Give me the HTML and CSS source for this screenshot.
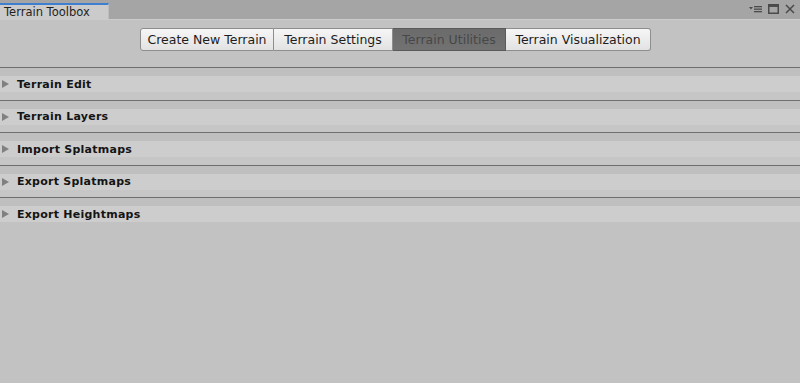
FILE: index.html
```html
<!DOCTYPE html>
<html>
<head>
<meta charset="utf-8">
<link rel="stylesheet" href="styles.css">
</head>
<body>
<div class="window">
  <div class="tabbar">
    <div class="tab">Terrain Toolbox</div>
    <div class="win-icons">
      <svg width="13" height="10" viewBox="0 0 13 10"><path d="M0 3 L4 3 L2 5.5 Z" fill="#4a4a4a"/><rect x="5" y="2" width="8" height="1.3" fill="#4a4a4a"/><rect x="5" y="4.5" width="8" height="1.3" fill="#4a4a4a"/><rect x="5" y="7" width="8" height="1.3" fill="#4a4a4a"/></svg>
      <svg width="11" height="10" viewBox="0 0 11 10"><rect x="0.75" y="0.75" width="9.5" height="8.5" fill="none" stroke="#4a4a4a" stroke-width="1.5"/><rect x="0.75" y="0.75" width="9.5" height="2.2" fill="#4a4a4a"/></svg>
      <svg width="10" height="10" viewBox="0 0 10 10"><path d="M1 1 L9 9 M9 1 L1 9" stroke="#4a4a4a" stroke-width="1.5"/></svg>
    </div>
  </div>
  <div class="content">
    <div class="toolbar">
      <div class="btn first">Create New Terrain</div>
      <div class="btn second">Terrain Settings</div>
      <div class="btn active">Terrain Utilities</div>
      <div class="btn last">Terrain Visualization</div>
    </div>
    <div class="sections">
      <div class="section"><div class="header"><span class="arrow"></span><span class="title">Terrain Edit</span></div></div>
      <div class="section"><div class="header"><span class="arrow"></span><span class="title">Terrain Layers</span></div></div>
      <div class="section"><div class="header"><span class="arrow"></span><span class="title">Import Splatmaps</span></div></div>
      <div class="section"><div class="header"><span class="arrow"></span><span class="title">Export Splatmaps</span></div></div>
      <div class="section last-section"><div class="header"><span class="arrow"></span><span class="title">Export Heightmaps</span></div></div>
    </div>
  </div>
</div>
</body>
</html>
```

FILE: styles.css
```css
html, body {
  margin: 0;
  padding: 0;
  width: 800px;
  height: 383px;
  overflow: hidden;
  background: #c2c2c2;
  font-family: "DejaVu Sans", "Liberation Sans", sans-serif;
}
.window {
  display: flex;
  flex-direction: column;
  height: 383px;
}
.tabbar {
  height: 19px;
  background: #a5a5a5;
  display: flex;
  align-items: flex-end;
  justify-content: space-between;
  border-bottom: 1px solid #cbcbcb;
}
.tab {
  width: 104px;
  height: 14px;
  background: #cbcbcb;
  border-top: 2px solid #3f7fd0;
  border-right: 1px solid #bdbdbd;
  font-size: 11.5px;
  line-height: 15px;
  color: #1f1f1f;
  padding-left: 4px;
  white-space: nowrap;
}
.win-icons {
  display: flex;
  align-items: center;
  gap: 6px;
  align-self: flex-start;
  padding-top: 4px;
  padding-right: 5px;
}
.content {
  flex: 1;
}
.toolbar {
  display: flex;
  padding-left: 140px;
  padding-top: 8px;
  height: 23px;
}
.btn {
  box-sizing: border-box;
  height: 23px;
  line-height: 21px;
  font-size: 12.5px;
  color: #1d1d1d;
  background: linear-gradient(#f6f6f6, #e2e2e2);
  border: 1px solid #8e8e8e;
  border-left: none;
  text-align: center;
  white-space: nowrap;
}
.btn.first {
  border-left: 1px solid #8e8e8e;
  border-radius: 3px 0 0 3px;
  width: 134px;
}
.btn.second { width: 119px; }
.btn.active {
  background: linear-gradient(#6b6b6b, #727272);
  color: #474747;
  border-color: #5a5a5a;
  width: 113px;
}
.btn.last {
  border-radius: 0 3px 3px 0;
  width: 145px;
}
.sections {
  margin-top: 16px;
}
.section {
  border-top: 1px solid #6e6e6e;
  padding-top: 8px;
  height: 23.5px;
  box-sizing: content-box;
  background: linear-gradient(#bfbfbf 0, #bfbfbf 8px, #c6c6c6 8px);
}
.last-section {
  background: linear-gradient(#bfbfbf 0, #bfbfbf 8px, #c2c2c2 8px);
}
.header {
  height: 16px;
  background: #cdcdcd;
  display: flex;
  align-items: center;
}
.arrow {
  width: 0;
  height: 0;
  border-top: 4.5px solid transparent;
  border-bottom: 4.5px solid transparent;
  border-left: 7px solid #808080;
  margin-left: 2px;
  margin-right: 8px;
}
.title {
  font-size: 11px;
  font-weight: bold;
  letter-spacing: 0.25px;
  color: #141414;
}
```
